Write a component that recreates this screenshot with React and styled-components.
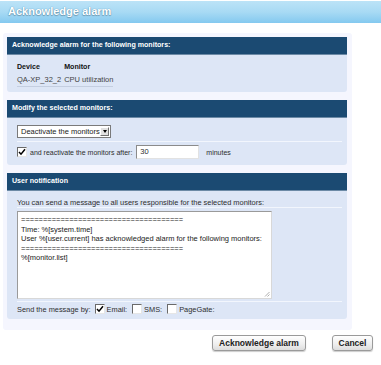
import React from "react";
import styled, { createGlobalStyle } from "styled-components";

const Global = createGlobalStyle`
  html, body { margin: 0; padding: 0; background: #ffffff; }
  body { font-family: "Liberation Sans", Arial, sans-serif; color: #333; }
  * { box-sizing: border-box; }
`;

const Page = styled.div`
  width: 381px;
  height: 365px;
  overflow: hidden;
  background: #fff;
`;

const TitleBar = styled.div`
  height: 22px;
  margin-top: 1px;
  background: linear-gradient(#bce3f7, #a8daf4 50%, #84c9ef);
  color: #fff;
  font-weight: bold;
  font-size: 11px;
  line-height: 21px;
  padding-left: 8px;
  text-shadow: 0 0 1px #3f7fa6, 0 1px 1px rgba(0, 0, 0, 0.25);
`;

const Outer = styled.div`
  margin: 10px 29px 0 3px;
  background: #f5f6fe;
  border-radius: 3px;
  padding: 4px 5px 11px 4px;
  display: flex;
  flex-direction: column;
  gap: 8px;
`;

const Section = styled.div`
  background: #dde6f6;
  border-radius: 0 0 3px 3px;
`;

const SectionHeader = styled.div`
  height: 18px;
  line-height: 17px;
  background: #1b4a72;
  border-bottom: 1px solid #6c8aa6;
  color: #fff;
  font-weight: bold;
  font-size: 7.1px;
  padding-left: 5px;
`;

const Body = styled.div`
  padding: ${(p) => p.$pad || "6px 10px"};
  font-size: 7px;
  color: #2e2e2e;
`;

const Table = styled.div`
  display: grid;
  grid-template-columns: auto auto;
  justify-content: start;
`;

const Th = styled.div`
  font-weight: bold;
  font-size: 7.1px;
  color: #111;
  height: 13px;
  line-height: 13px;
  padding-right: 3px;
`;

const Td = styled.div`
  height: 13px;
  line-height: 12px;
  border-bottom: 1px solid #c4cee0;
  color: #444;
  font-size: 7.5px;
  white-space: nowrap;
  padding-right: ${(p) => (p.$last ? "0" : "3px")};
`;

const Select = styled.div`
  display: inline-flex;
  align-items: center;
  justify-content: space-between;
  width: 94px;
  height: 13px;
  border: 1px solid #7a7a7a;
  background: #fff;
  padding-left: 3px;
  font-size: 7.5px;
  color: #222;
`;

const SelArrow = styled.span`
  width: 9px;
  height: 9px;
  margin-right: 1px;
  background: #e0e0e0;
  border: 1px solid;
  border-color: #fff #707070 #707070 #fff;
  display: flex;
  align-items: center;
  justify-content: center;
  &::after {
    content: "";
    border-left: 2.5px solid transparent;
    border-right: 2.5px solid transparent;
    border-top: 3px solid #000;
  }
`;

const Divider = styled.div`
  height: 1px;
  background: #f2f6fd;
  margin: ${(p) => p.$m || "4px 0"};
`;

const Row = styled.div`
  display: flex;
  align-items: center;
  gap: ${(p) => p.$gap || "3px"};
  height: ${(p) => p.$h || "14px"};
  font-size: ${(p) => p.$fs || "inherit"};
  white-space: nowrap;
`;

const Check = styled.span`
  width: 10px;
  height: 10px;
  border: 1px solid;
  border-color: #6a6a6a #e6e6e6 #e6e6e6 #6a6a6a;
  background: #fff;
  display: inline-flex;
  align-items: center;
  justify-content: center;
  flex: none;
  margin-left: ${(p) => p.$ml || "0"};
`;

const Input = styled.div`
  width: 63px;
  height: 14px;
  border: 1px solid;
  border-color: #8b8b8b #e2e2e2 #e2e2e2 #8b8b8b;
  background: #fff;
  padding-left: 3px;
  line-height: 12px;
  font-size: 7.5px;
  margin: 0 4px 0 1px;
`;

const TextArea = styled.div`
  width: 255px;
  height: 88px;
  border: 1px solid;
  border-color: #9a9a9a #d8d8d8 #d8d8d8 #9a9a9a;
  background: #fff;
  padding: 3px 3px;
  position: relative;
  font-size: 7.5px;
  line-height: 9.5px;
  color: #222;
  white-space: pre;
`;

const Grip = styled.svg`
  position: absolute;
  right: 1px;
  bottom: 1px;
`;

const Buttons = styled.div`
  display: flex;
  justify-content: flex-end;
  gap: 26px;
  padding: 5px 8px 0 0;
`;

const Button = styled.div`
  width: ${(p) => p.$w};
  height: 16px;
  border: 1px solid #9a9a9a;
  border-radius: 3px;
  background: linear-gradient(#ffffff, #eeeeee 60%, #dddddd);
  box-shadow: 0 1px 1px #ccc;
  font-weight: bold;
  font-size: 8.5px;
  line-height: 14px;
  text-align: center;
  color: #222;
`;

const Tick = () => (
  <svg width="8" height="8" viewBox="0 0 8 8">
    <path d="M1 4 L3 6.2 L7 1.2" stroke="#000" strokeWidth="1.5" fill="none" />
  </svg>
);

const message = `=====================================
Time: %[system.time]
User %[user.current] has acknowledged alarm for the following monitors:
=====================================
%[monitor.list]`;

export default function App() {
  return (
    <Page>
      <Global />
      <TitleBar>Acknowledge alarm</TitleBar>
      <Outer>
        <Section>
          <SectionHeader>Acknowledge alarm for the following monitors:</SectionHeader>
          <Body $pad="6px 10px 5px">
            <Table>
              <Th>Device</Th>
              <Th>Monitor</Th>
              <Td>QA-XP_32_2</Td>
              <Td $last>CPU utilization</Td>
            </Table>
          </Body>
        </Section>
        <Section>
          <SectionHeader>Modify the selected monitors:</SectionHeader>
          <Body $pad="7px 5px 6px 10px">
            <Select>
              Deactivate the monitors
              <SelArrow />
            </Select>
            <Divider $m="3px 0 3px" />
            <Row>
              <Check><Tick /></Check>
              <span>and reactivate the monitors after:</span>
              <Input>30</Input>
              <span>minutes</span>
            </Row>
          </Body>
        </Section>
        <Section>
          <SectionHeader>User notification</SectionHeader>
          <Body $pad="6px 5px 4px 10px">
            <Row $h="10px" $fs="7.45px">You can send a message to all users responsible for the selected monitors:</Row>
            <Divider $m="0 0 3px" />
            <TextArea>
              {message}
              <Grip width="6" height="6" viewBox="0 0 6 6">
                <path d="M5.5 1 L1 5.5 M5.5 3.5 L3.5 5.5" stroke="#999" strokeWidth="0.8" />
              </Grip>
            </TextArea>
            <Divider $m="2px 0 1px" />
            <Row $h="12px" $gap="2px" $fs="7.4px">
              <span>Send the message by:</span>
              <Check $ml="2px"><Tick /></Check>
              <span>Email:</span>
              <Check $ml="3px" />
              <span>SMS:</span>
              <Check $ml="3px" />
              <span>PageGate:</span>
            </Row>
          </Body>
        </Section>
      </Outer>
      <Buttons>
        <Button $w="94px">Acknowledge alarm</Button>
        <Button $w="41px">Cancel</Button>
      </Buttons>
    </Page>
  );
}
